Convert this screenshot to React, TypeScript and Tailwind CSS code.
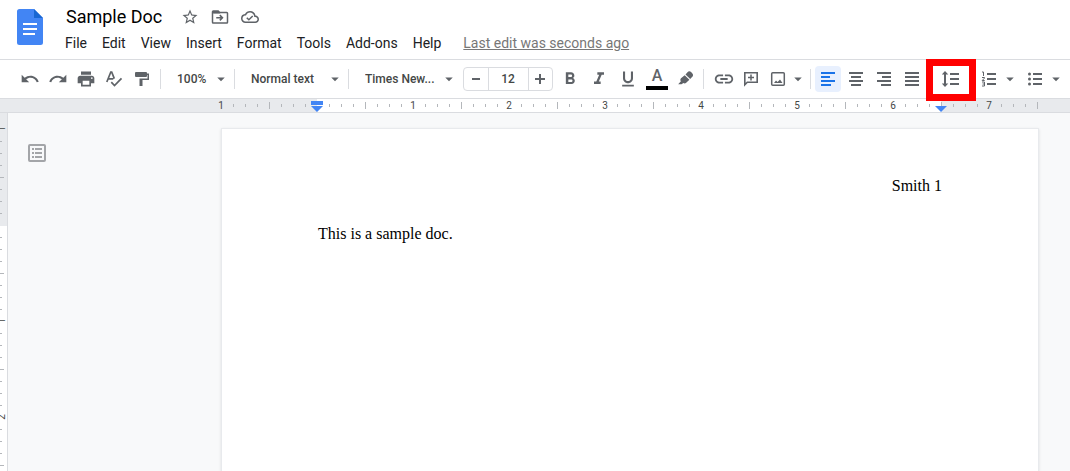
import type { ReactNode } from "react";
import {
  MdArrowDropDown,
  MdFormatBold,
  MdFormatItalic,
  MdFormatUnderlined,
  MdLink,
  MdPrint,
  MdRedo,
  MdStarBorder,
  MdUndo,
} from "react-icons/md";

function DocsLogo() {
  return (
    <svg width="26" height="36" viewBox="0 0 26 36" aria-hidden="true">
      <path d="M2.5 0H17l9 9v24.5a2.5 2.5 0 0 1-2.5 2.5h-21A2.5 2.5 0 0 1 0 33.5v-31A2.5 2.5 0 0 1 2.5 0z" fill="#4285f4" />
      <path d="M17 0l9 9h-9z" fill="#1967d2" />
      <path d="M6 14h14v2H6zM6 19h14v2H6zM6 24h12v2H6z" fill="#fff" />
    </svg>
  );
}

function Glyph({ d }: { d: string }) {
  return (
    <svg width="18" height="18" viewBox="0 0 18 18" fill="currentColor" aria-hidden="true">
      <path d={d} />
    </svg>
  );
}

function MoveIcon() {
  return (
    <svg width="18" height="18" viewBox="0 0 24 24" fill="currentColor" aria-hidden="true">
      <path d="M21 5h-9l-2-2H3a2 2 0 0 0-2 2v14a2 2 0 0 0 2 2h18a2 2 0 0 0 2-2V7a2 2 0 0 0-2-2zm0 14H3V7h18v12z" />
      <path d="M3 4h7l2.5 3.2H3z" />
      <path d="M12.5 8.8l4.2 4.2-4.2 4.2-1.5-1.5L12.7 14H7v-2h5.7L11 10.3z" />
    </svg>
  );
}

function CloudIcon() {
  return (
    <svg width="18" height="18" viewBox="0 0 24 24" fill="currentColor" aria-hidden="true">
      <path d="M19.35 10.04A7.49 7.49 0 0 0 12 4C9.11 4 6.6 5.64 5.35 8.04A5.994 5.994 0 0 0 0 14c0 3.31 2.69 6 6 6h13c2.76 0 5-2.24 5-5 0-2.64-2.05-4.78-4.65-4.96zM19 18H6c-2.21 0-4-1.79-4-4 0-2.05 1.53-3.76 3.56-3.97l1.07-.11.5-.95A5.469 5.469 0 0 1 12 6c2.62 0 4.88 1.86 5.39 4.43l.3 1.5 1.53.11A2.98 2.98 0 0 1 22 15c0 1.65-1.35 3-3 3zm-8.5-3.7L8.4 12.2 7 13.6l3.5 3.5 5.8-5.8-1.4-1.4z" />
    </svg>
  );
}

function SpellIcon() {
  return (
    <svg width="18" height="18" viewBox="0 0 18 18" fill="none" stroke="currentColor" strokeWidth="1.7" aria-hidden="true">
      <path d="M1.8 12L5.8 2h.9L9.3 8.6M3.3 8.8h5" />
      <path d="M6.3 12.2l3.2 3.3 7-7.2" />
    </svg>
  );
}

function HighlightIcon() {
  return (
    <svg width="18" height="18" viewBox="0 0 18 18" fill="currentColor" aria-hidden="true">
      <path d="M10.5 2.3a2.6 2.6 0 0 1 3.6-.2l1.3 1.3c.9 1.1.8 2.5-.1 3.4L13.2 9 8.5 4.4z" />
      <path d="M7.7 5.2l4.7 4.6-3.2 3c-1 .8-2 .7-2.8.1L4.5 14.2H1.2l2.7-2.9c-.8-1-.7-2.1.1-3z" />
    </svg>
  );
}

function CommentIcon() {
  return (
    <svg width="18" height="18" viewBox="0 0 18 18" aria-hidden="true">
      <path d="M2.8 2.8h12.4v9.4H5.3l-2.5 2.5z" fill="none" stroke="currentColor" strokeWidth="1.6" />
      <path d="M9 4.5v6M6 7.5h6" stroke="currentColor" strokeWidth="1.5" />
    </svg>
  );
}

function ImageIcon() {
  return (
    <svg width="18" height="18" viewBox="0 0 18 18" aria-hidden="true">
      <rect x="2.7" y="2.7" width="12.6" height="12.6" rx="1" fill="none" stroke="currentColor" strokeWidth="1.5" />
      <path d="M5 13l2-2.6 1.6 1.5L11 9.5l2.5 3.5z" fill="currentColor" />
    </svg>
  );
}

function NumberedIcon() {
  return (
    <svg width="18" height="18" viewBox="0 0 18 18" aria-hidden="true">
      <path d="M7 3h9v2H7zM7 8h9v2H7zM7 13h9v2H7z" fill="currentColor" />
      <path
        d="M2 2h1.5v4M2 7.5h2.5v.6L2.2 10.5h2.5M2 12h2.5v4H2M2.5 14h2"
        fill="none"
        stroke="currentColor"
        strokeWidth="1"
      />
    </svg>
  );
}

function BulletedIcon() {
  return (
    <svg width="18" height="18" viewBox="0 0 18 18" fill="currentColor" aria-hidden="true">
      <path d="M7 3h9v2H7zM7 8h9v2H7zM7 13h9v2H7z" />
      <circle cx="3.500" cy="4" r="1.5" />
      <circle cx="3.500" cy="9" r="1.5" />
      <circle cx="3.500" cy="14" r="1.5" />
    </svg>
  );
}

function OutlineIcon() {
  return (
    <svg width="18" height="18" viewBox="0 0 18 18" aria-hidden="true">
      <rect x="1" y="1" width="16" height="16" rx="1" fill="none" stroke="currentColor" strokeWidth="2" />
      <path d="M4 4h2v2H4zM7 4h7v2H7zM4 8h2v2H4zM7 8h7v2H7zM4 12h2v2H4zM7 12h7v2H7z" fill="currentColor" />
    </svg>
  );
}

const paint = "M3 2h10a1 1 0 0 1 1 1v.5h2V10H9.5v6h-3V8.5h8V5H14v1a1 1 0 0 1-1 1H3a1 1 0 0 1-1-1V3a1 1 0 0 1 1-1z";
const alignLeft = "M2 2h14v2H2zM2 6h9v2H2zM2 10h14v2H2zM2 14h10v2H2z";
const alignCenter = "M2 2h14v2H2zM4 6h10v2H4zM2 10h14v2H2zM4 14h10v2H4z";
const alignRight = "M2 2h14v2H2zM7 6h9v2H7zM2 10h14v2H2zM6 14h10v2H6z";
const justify = "M2 2h14v2H2zM2 6h14v2H2zM2 10h14v2H2zM2 14h14v2H2z";
const spacing = "M8 3h9v2H8zM8 8h9v2H8zM8 13h9v2H8zM3 1l3.300 3.500H4v9h2.300L3 17-.3 13.500H2v-9H-.3z";
const minus = "M5 8h8v2H5z";
const plus = "M4 8h4V4h2v4h4v2h-4v4H8v-4H4z";

function ToolButton({ label, active, children }: { label: string; active?: boolean; children: ReactNode }) {
  return (
    <button
      type="button"
      aria-label={label}
      className={
        active
          ? "flex size-[26px] shrink-0 items-center justify-center rounded-sm bg-[#e8f0fe] text-[#1a73e8]"
          : "flex size-[26px] shrink-0 items-center justify-center rounded-sm"
      }
    >
      {children}
    </button>
  );
}

function MenuArrow({ label }: { label: string }) {
  return (
    <button type="button" aria-label={label} className="flex h-[26px] w-3 shrink-0 items-center justify-center">
      <MdArrowDropDown size={18} className="shrink-0" />
    </button>
  );
}

function Separator() {
  return <div className="mx-1 h-5 w-px shrink-0 bg-[#dadce0]" />;
}

function Picker({ label, value, width }: { label: string; value: string; width: string }) {
  return (
    <div className={`relative flex h-[26px] shrink-0 items-center ${width}`}>
      <select
        aria-label={label}
        defaultValue={value}
        className="h-full w-full appearance-none bg-transparent pl-3 text-xs font-medium text-[#444746] outline-none"
      >
        <option>{value}</option>
      </select>
      <MdArrowDropDown size={18} className="pointer-events-none absolute right-0" />
    </div>
  );
}

const menus = ["File", "Edit", "View", "Insert", "Format", "Tools", "Add-ons", "Help"];

const horizontalTicks = Array.from({ length: 69 }, (_, i) => i - 8);
const verticalTicks = Array.from({ length: 40 }, (_, i) => i - 8);

function HorizontalRuler() {
  return (
    <div className="relative flex h-[15px] overflow-hidden border-y border-[#dadce0] bg-[linear-gradient(to_right,#e8eaed_317px,#fff_317px,#fff_941px,#e8eaed_941px)] pl-[215px]">
      {horizontalTicks.map((t) => (
        <div key={t} className="flex w-3 shrink-0 items-center justify-center">
          {t % 8 === 0 && t !== 0 ? (
            <span className="text-[10px] leading-3 text-[#444746]">{Math.abs(t / 8)}</span>
          ) : t === 0 ? null : (
            <span className={t % 4 === 0 ? "h-[7px] w-px bg-[#b4b7bb]" : "h-[3px] w-px bg-[#b4b7bb]"} />
          )}
        </div>
      ))}
      <svg width="12" height="11" viewBox="0 0 12 11" className="absolute left-[311px] top-[2px]" aria-hidden="true">
        <path d="M0 0h12v4H0zM0 5h12L6 11z" fill="#4285f4" />
      </svg>
      <svg width="12" height="6" viewBox="0 0 12 6" className="absolute left-[935px] top-[7px]" aria-hidden="true">
        <path d="M0 0h12L6 6z" fill="#4285f4" />
      </svg>
    </div>
  );
}

function VerticalRuler() {
  return (
    <div className="w-2 shrink-0 overflow-hidden border-r border-[#dadce0] bg-[linear-gradient(to_bottom,#e8eaed_113px,#fff_113px)] pt-[10px]">
      {verticalTicks.map((t) => (
        <div key={t} className="flex h-3 items-center">
          {t === 0 ? null : t % 8 === 0 ? (
            <span className="-ml-1 flex size-3 shrink-0 -rotate-90 items-center justify-center text-[10px] leading-3 text-[#444746]">
              {Math.abs(t / 8)}
            </span>
          ) : (
            <span className={t % 4 === 0 ? "h-px w-1 bg-[#b4b7bb]" : "h-px w-0.5 bg-[#b4b7bb]"} />
          )}
        </div>
      ))}
    </div>
  );
}

export default function App() {
  return (
    <div className="flex h-screen flex-col overflow-hidden bg-white font-['Roboto',sans-serif] text-[#5f6368]">
      <header className="flex h-[59px] shrink-0 pl-[17px] pt-[9px]">
        <a href="#home" aria-label="Docs home" className="shrink-0">
          <DocsLogo />
        </a>
        <div className="flex flex-col pl-[15px]">
          <div className="-mt-1 flex h-6 items-center pl-2">
            <input
              aria-label="Document title"
              defaultValue="Sample Doc"
              className="field-sizing-content bg-transparent text-lg leading-6 text-black outline-none"
            />
            <div className="flex items-center gap-3 pl-[19px]">
              <button type="button" aria-label="Star">
                <MdStarBorder size={18} />
              </button>
              <button type="button" aria-label="Move">
                <MoveIcon />
              </button>
              <button type="button" aria-label="Document status">
                <CloudIcon />
              </button>
            </div>
          </div>
          <nav className="flex h-6 items-center gap-px pt-1 text-sm text-[#202124]">
            {menus.map((m) => (
              <button key={m} type="button" className="px-[7px]">
                {m}
              </button>
            ))}
            <a href="#history" className="ml-[14px] text-[#777] underline">
              Last edit was seconds ago
            </a>
          </nav>
        </div>
      </header>

      <div role="toolbar" className="flex h-[39px] shrink-0 items-center border-t border-[#dadce0] pl-[17px]">
        <div className="flex gap-0.5 pr-px">
          <ToolButton label="Undo"><MdUndo size={20} /></ToolButton>
          <ToolButton label="Redo"><MdRedo size={20} /></ToolButton>
          <ToolButton label="Print"><MdPrint size={20} /></ToolButton>
          <ToolButton label="Spelling check"><SpellIcon /></ToolButton>
          <ToolButton label="Paint format"><Glyph d={paint} /></ToolButton>
        </div>
        <Separator />
        <Picker label="Zoom" value="100%" width="w-[65px]" />
        <Separator />
        <Picker label="Style" value="Normal text" width="w-[105px]" />
        <Separator />
        <Picker label="Font" value="Times New..." width="w-[105px]" />
        <div className="ml-[5px] mr-1 flex h-6 w-[90px] shrink-0 rounded-sm border border-[#dadce0]">
          <button type="button" aria-label="Decrease font size" className="flex flex-1 items-center justify-center">
            <Glyph d={minus} />
          </button>
          <input
            aria-label="Font size"
            defaultValue="12"
            className="w-[41px] border-x border-[#dadce0] text-center text-xs font-medium text-[#444746] outline-none"
          />
          <button type="button" aria-label="Increase font size" className="flex flex-1 items-center justify-center">
            <Glyph d={plus} />
          </button>
        </div>
        <div className="flex gap-[3px]">
          <ToolButton label="Bold"><MdFormatBold size={20} /></ToolButton>
          <ToolButton label="Italic"><MdFormatItalic size={20} /></ToolButton>
          <ToolButton label="Underline"><MdFormatUnderlined size={20} /></ToolButton>
          <ToolButton label="Text color">
            <span className="flex flex-col items-center gap-0.5">
              <span className="text-base font-medium leading-4">A</span>
              <span className="h-1 w-[22px] bg-black" />
            </span>
          </ToolButton>
          <ToolButton label="Highlight color"><HighlightIcon /></ToolButton>
        </div>
        <Separator />
        <div className="flex gap-px pl-[3px] pr-0.5">
          <ToolButton label="Insert link"><MdLink size={22} /></ToolButton>
          <ToolButton label="Add comment"><CommentIcon /></ToolButton>
          <ToolButton label="Insert image"><ImageIcon /></ToolButton>
          <MenuArrow label="Image options" />
        </div>
        <Separator />
        <div className="flex gap-0.5">
          <ToolButton label="Left align" active><Glyph d={alignLeft} /></ToolButton>
          <ToolButton label="Center align"><Glyph d={alignCenter} /></ToolButton>
          <ToolButton label="Right align"><Glyph d={alignRight} /></ToolButton>
          <ToolButton label="Justify"><Glyph d={justify} /></ToolButton>
        </div>
        <div className="relative ml-[13px] mr-3 flex shrink-0">
          <ToolButton label="Line spacing"><Glyph d={spacing} /></ToolButton>
          <span className="pointer-events-none absolute -inset-x-3 -top-[7px] z-10 h-[42px] border-[7px] border-[#ff0000]" />
        </div>
        <div className="flex gap-0.5">
          <ToolButton label="Numbered list"><NumberedIcon /></ToolButton>
          <MenuArrow label="Numbered list options" />
        </div>
        <div className="ml-1.5 flex gap-0.5">
          <ToolButton label="Bulleted list"><BulletedIcon /></ToolButton>
          <MenuArrow label="Bulleted list options" />
        </div>
      </div>

      <HorizontalRuler />

      <main className="flex min-h-0 flex-1 bg-[#f8f9fa]">
        <VerticalRuler />
        <div className="flex w-[213px] shrink-0 items-start pl-5 pt-[31px] text-[#a3a5a8]">
          <button type="button" aria-label="Show document outline">
            <OutlineIcon />
          </button>
        </div>
        <article className="mt-[15px] w-[818px] shrink-0 border-x border-t border-[#e8eaed] bg-white px-24 pt-12 font-['Liberation_Serif',serif] text-base leading-[18px] text-black shadow-sm">
          <p className="text-right">Smith 1</p>
          <p className="mt-[30px]">This is a sample doc.</p>
        </article>
      </main>
    </div>
  );
}
